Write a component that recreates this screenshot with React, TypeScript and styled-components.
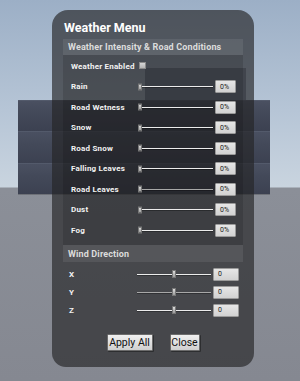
import React from 'react';
import styled, { createGlobalStyle } from 'styled-components';

const GlobalStyle = createGlobalStyle`
  html, body {
    margin: 0;
    padding: 0;
    overflow: hidden;
  }
  body {
    font-family: Roboto, "Liberation Sans", sans-serif;
  }
`;

const Scene = styled.div`
  position: relative;
  width: 300px;
  height: 381px;
  overflow: hidden;
  box-sizing: border-box;
  padding: 10px 0 0 52px;
  background: linear-gradient(
    to bottom,
    #9cafc6 0px,
    #b6c5d6 110px,
    #c9d4df 187px,
    #8b8f98 188px,
    #858891 381px
  );
`;

// distant scene props behind the menu
const Blocks = styled.div`
  position: absolute;
  left: 18px;
  top: 100px;
  width: 252px;
  height: 94px;
  display: flex;
  flex-direction: column;
`;

const Block = styled.div`
  flex: 1;
  background: linear-gradient(to bottom, #4a5061 0%, #434959 40%, #3c4151 100%);
  border-top: 1px solid #535a6b;
  box-shadow: 0 1px 0 rgba(0, 0, 0, 0.2);
`;

const FarBox = styled.div`
  position: absolute;
  left: 145px;
  top: 68px;
  width: 101px;
  height: 32px;
  background: #79839a;
`;

const Panel = styled.div`
  position: relative;
  z-index: 1;
  width: 202px;
  height: 357px;
  box-sizing: border-box;
  padding: 0 11px;
  border-radius: 16px 16px 14px 14px;
  background: rgba(36, 36, 38, 0.66);
  display: flex;
  flex-direction: column;
`;

const Title = styled.div`
  height: 29px;
  padding: 5px 0 0 1px;
  box-sizing: border-box;
  display: flex;
  align-items: center;
  font-size: 12.5px;
  font-weight: 700;
  color: #ffffff;
`;

const SectionHeader = styled.div<{ $h: number }>`
  height: ${(p) => p.$h}px;
  padding-left: 5px;
  display: flex;
  align-items: center;
  background: rgba(255, 255, 255, 0.08);
  font-size: 9px;
  font-weight: 700;
  color: #dcdcdc;
  letter-spacing: 0.15px;
`;

const Content = styled.div`
  height: 190px;
  box-sizing: border-box;
  padding-top: 1px;
  background: rgba(0, 0, 0, 0.13);
`;

const Row = styled.div<{ $h: number; $pad: number }>`
  height: ${(p) => p.$h}px;
  display: flex;
  align-items: center;
  padding-left: ${(p) => p.$pad}px;
`;

const Label = styled.div<{ $w: number }>`
  width: ${(p) => p.$w}px;
  font-size: 8px;
  font-weight: 700;
  color: #f2f2f2;
  letter-spacing: 0.2px;
`;

const Checkbox = styled.div`
  width: 7px;
  height: 7px;
  margin-top: -1px;
  background: linear-gradient(to bottom, #d6d6d6, #b4b4b4);
  border: 1px solid #8a8a8a;
  box-sizing: border-box;
`;

const Slider = styled.div<{ $w: number }>`
  position: relative;
  width: ${(p) => p.$w}px;
  height: 8px;
  display: flex;
  align-items: center;
`;

const Track = styled.div<{ $dim?: boolean }>`
  flex: 1;
  height: 1px;
  background: ${(p) => (p.$dim ? '#a8a8a8' : '#ececec')};
  box-shadow: 0 1px 0 rgba(0, 0, 0, 0.3);
`;

const Thumb = styled.div<{ $h: number }>`
  position: absolute;
  top: 50%;
  width: 4px;
  height: ${(p) => p.$h}px;
  transform: translate(-50%, -50%);
  background: linear-gradient(to bottom, #dcdcdc, #9c9c9c);
  border: 1px solid #777;
  box-sizing: border-box;
`;

const ValueBox = styled.div<{ $w: number; $h: number }>`
  width: ${(p) => p.$w}px;
  height: ${(p) => p.$h}px;
  margin-left: 2px;
  box-sizing: border-box;
  padding-left: 4px;
  display: flex;
  align-items: center;
  background: linear-gradient(to bottom, #e6e6e6, #d2d2d2);
  border: 1px solid #9a9a9a;
  border-radius: 1px;
  font-size: 7px;
  color: #1a1a1a;
`;

const WindRows = styled.div`
  padding-top: 3px;
`;

const Buttons = styled.div`
  display: flex;
  justify-content: center;
  gap: 17px;
  margin-top: 15px;
`;

const Button = styled.button<{ $w: number }>`
  width: ${(p) => p.$w}px;
  height: 17px;
  padding: 0;
  font-family: Roboto, "Liberation Sans", sans-serif;
  font-size: 10.5px;
  color: #111;
  background: linear-gradient(to bottom, #f0f0f0, #cfcfcf);
  border: 1px solid #6c6c6c;
  border-radius: 1px;
  box-shadow: 1px 1px 0 rgba(0, 0, 0, 0.35);
  cursor: pointer;
`;

const intensity: { name: string; dim?: boolean }[] = [
  { name: 'Rain' },
  { name: 'Road Wetness' },
  { name: 'Snow' },
  { name: 'Road Snow' },
  { name: 'Falling Leaves' },
  { name: 'Road Leaves', dim: true },
  { name: 'Dust' },
  { name: 'Fog' },
];

const wind: { axis: string; dim?: boolean }[] = [
  { axis: 'X' },
  { axis: 'Y', dim: true },
  { axis: 'Z' },
];

const App = () => {
  return (
    <>
      <GlobalStyle />
      <Scene>
        <FarBox />
        <Blocks>
          <Block />
          <Block />
          <Block />
        </Blocks>
        <Panel>
          <Title>Weather Menu</Title>
          <SectionHeader $h={16}>Weather Intensity &amp; Road Conditions</SectionHeader>
          <Content>
            <Row $h={20.5} $pad={8}>
              <Label $w={68}>Weather Enabled</Label>
              <Checkbox />
            </Row>
            {intensity.map((it) => (
              <Row key={it.name} $h={20.5} $pad={8}>
                <Label $w={68}>{it.name}</Label>
                <Slider $w={74}>
                  <Thumb $h={7} style={{ left: '1px' }} />
                  <Track $dim={it.dim} />
                </Slider>
                <ValueBox $w={21} $h={13}>0%</ValueBox>
              </Row>
            ))}
          </Content>
          <SectionHeader $h={17}>Wind Direction</SectionHeader>
          <WindRows>
            {wind.map((w) => (
              <Row key={w.axis} $h={18} $pad={6}>
                <Label $w={68}>{w.axis}</Label>
                <Slider $w={74}>
                  <Thumb $h={8} style={{ left: '50%' }} />
                  <Track $dim={w.dim} />
                </Slider>
                <ValueBox $w={26} $h={13}>0</ValueBox>
              </Row>
            ))}
          </WindRows>
          <Buttons>
            <Button $w={46}>Apply All</Button>
            <Button $w={30}>Close</Button>
          </Buttons>
        </Panel>
      </Scene>
    </>
  );
};

export default App;
